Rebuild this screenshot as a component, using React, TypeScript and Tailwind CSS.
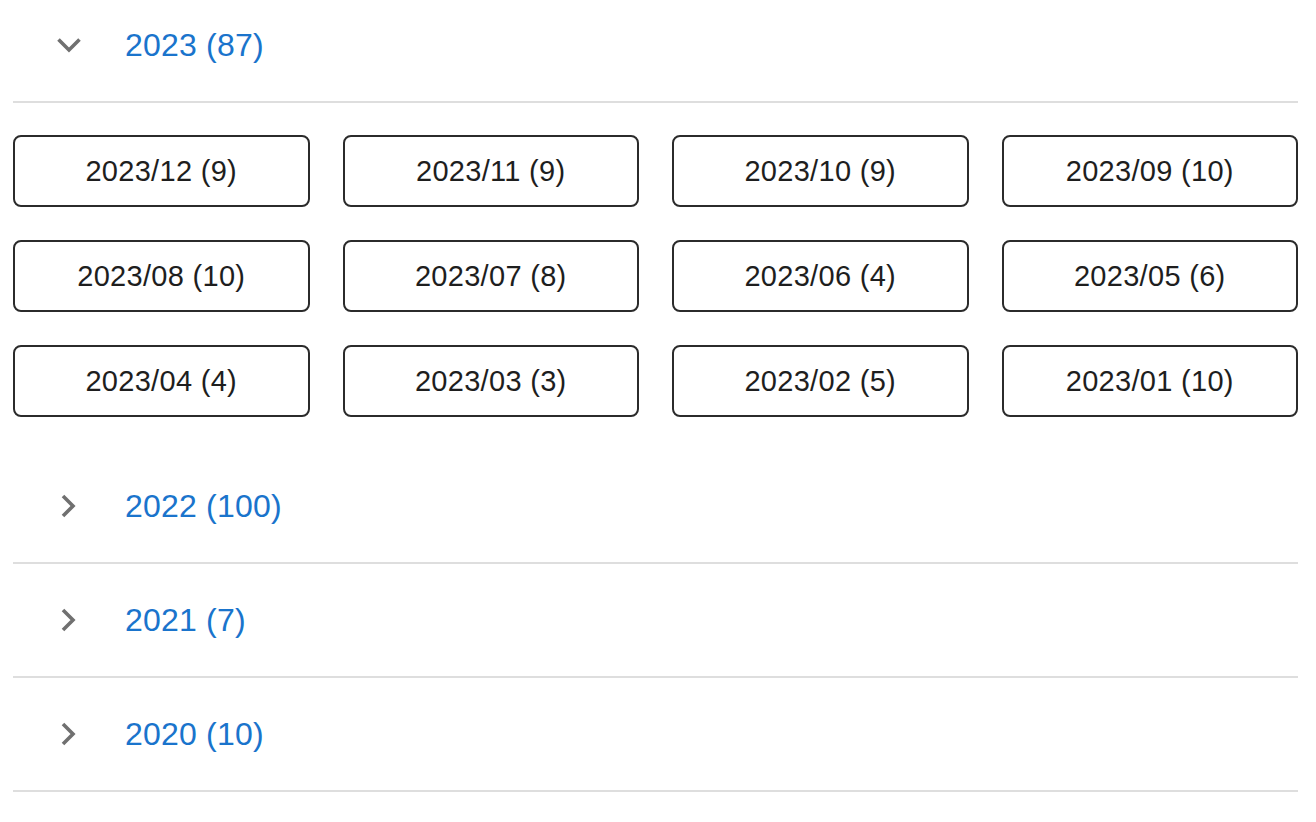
import React, { useState } from "react";

type Year = { year: number; count: number; months: { label: string; count: number }[] };

const years: Year[] = [
  {
    year: 2023,
    count: 87,
    months: [
      { label: "2023/12", count: 9 },
      { label: "2023/11", count: 9 },
      { label: "2023/10", count: 9 },
      { label: "2023/09", count: 10 },
      { label: "2023/08", count: 10 },
      { label: "2023/07", count: 8 },
      { label: "2023/06", count: 4 },
      { label: "2023/05", count: 6 },
      { label: "2023/04", count: 4 },
      { label: "2023/03", count: 3 },
      { label: "2023/02", count: 5 },
      { label: "2023/01", count: 10 },
    ],
  },
  { year: 2022, count: 100, months: [] },
  { year: 2021, count: 7, months: [] },
  { year: 2020, count: 10, months: [] },
];

const ChevronDown = () => (
  <svg width="26" height="16" viewBox="0 0 26 16" fill="none">
    <polyline points="2.5 2.5 13 13 23.5 2.5" stroke="#707070" strokeWidth="3.6" strokeLinejoin="miter" />
  </svg>
);

const ChevronRight = () => (
  <svg width="26" height="24" viewBox="0 0 26 24" fill="none">
    <polyline points="7 2 17 12 7 22" stroke="#707070" strokeWidth="3.6" strokeLinejoin="miter" />
  </svg>
);

export default function App() {
  const [open, setOpen] = useState<number>(2023);

  return (
    <div className="min-h-screen bg-white overflow-hidden" style={{ fontFamily: '"Liberation Sans", Arial, sans-serif' }}>
      <div className="ml-[13px] w-[1285px] -mt-[11px]">
        {years.map((y) => {
          const isOpen = open === y.year;
          return (
            <div key={y.year}>
              <button
                onClick={() => setOpen(isOpen ? 0 : y.year)}
                className="w-full h-[114px] flex items-center gap-[43px] pl-[43px] border-b-2 border-[#dedede] text-left"
              >
                <span className="w-[26px] flex justify-center">{isOpen ? <ChevronDown /> : <ChevronRight />}</span>
                <span className="text-[32px] leading-none tracking-[0.2px] text-[#1a74cc]">
                  {y.year} ({y.count})
                </span>
              </button>
              {isOpen && (
                <div className="grid grid-cols-4 gap-x-[33px] gap-y-[33px] pt-[32px] pb-[33px]">
                  {y.months.map((m) => (
                    <button
                      key={m.label}
                      className="h-[72px] pt-[2px] rounded-[8px] border-2 border-[#2b2b2b] text-[29px] tracking-[0.3px] text-[#1e1e1e] bg-white"
                    >
                      {m.label} ({m.count})
                    </button>
                  ))}
                </div>
              )}
            </div>
          );
        })}
      </div>
    </div>
  );
}
